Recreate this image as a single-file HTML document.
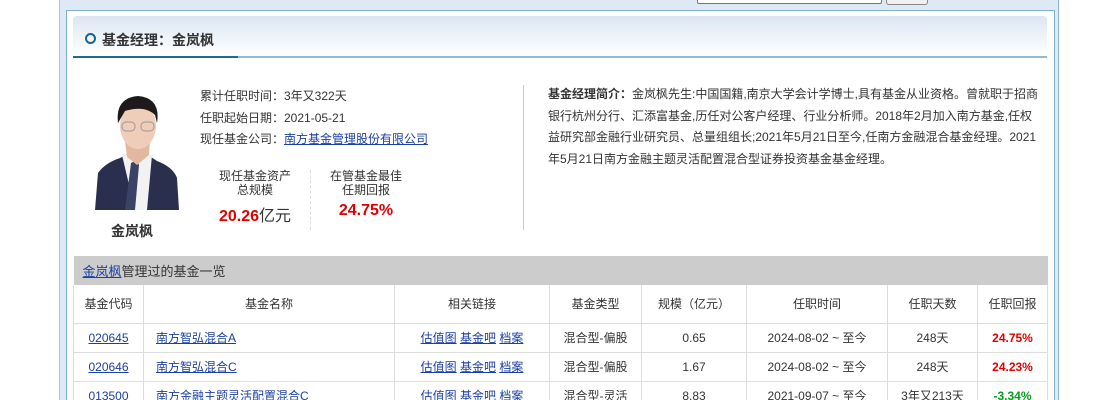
<!DOCTYPE html>
<html><head><meta charset="utf-8"><style>
*{margin:0;padding:0;box-sizing:border-box}
html,body{width:1120px;height:400px;overflow:hidden}
body{background:#fff;font-family:"Liberation Sans","Noto Sans CJK SC",sans-serif;font-size:12px;color:#333;position:relative}
.outer{position:absolute;left:59px;top:0;width:1000px;height:400px;background:#dde9f5;border-left:1px solid #a9c6de;border-right:1px solid #8fb4d0}
.inp{position:absolute;left:697px;top:0;width:185px;height:4px;background:#fff;border:1px solid #777;border-top:none;border-radius:0 0 2px 2px}
.btn{position:absolute;left:886px;top:0;width:42px;height:5px;background:#f0f0f0;border:1px solid #888;border-top:none;border-radius:0 0 3px 3px}
.panel{position:absolute;left:66px;top:10px;width:989px;height:390px;background:#fff;border:1px solid #7fb0cc;border-bottom:none}
.hd{position:absolute;left:73px;top:16px;width:974px;height:40px;background:linear-gradient(#dbe6f3,#fff);border-radius:4px 4px 0 0}
.hd b{position:absolute;left:29px;top:14px;font-size:14px;color:#333}
.circ{position:absolute;left:12px;top:17px;width:11px;height:11px;border:2px solid #1b6394;border-radius:50%}
.line1{position:absolute;left:73px;top:56px;width:974px;height:2px;background:#8dbdd3}
.line2{position:absolute;left:73px;top:56px;width:165px;height:2px;background:#1f6a94}
.t{position:absolute;white-space:nowrap}
a{color:#1a3fa5;text-decoration:underline}
.red{color:#e00000;font-weight:bold}
.grn{color:#079a1e;font-weight:bold}
.tw{position:absolute;left:73px;top:256px;width:975px;height:144px;overflow:hidden}
table{width:974px;border-collapse:collapse;table-layout:fixed}
td{border:1px solid #ddd;text-align:center;height:29px;font-size:12px;white-space:nowrap;overflow:hidden}
.cap td{background:#ccc;text-align:left;height:29px;font-size:13px;padding-left:9px;border:none;color:#333}
.th td{height:38px;border-top:none;color:#333}
</style></head><body>
<div class="outer"></div>
<div class="inp"></div><div class="btn"></div>
<div class="panel"></div>
<div class="hd"><div class="circ"></div><b>基金经理：金岚枫</b></div>
<div class="line1"></div><div class="line2"></div>
<svg class="t" style="left:95px;top:93px" width="84" height="117" viewBox="0 0 84 117">
<path d="M0 117 L3 80 Q10 70 25 65 L35 60 L50 60 L62 68 Q78 74 82 85 L84 117Z" fill="#2b2f4e"/>
<path d="M27 62 L40 117 L52 117 L57 62Z" fill="#f2f2f2"/>
<path d="M36 70 L42 67 L44 72 L40 117 L30 117Z" fill="#3a4266"/>
<path d="M30 48 L32 64 L42 72 L54 62 L55 46Z" fill="#e2b9a0"/>
<ellipse cx="43" cy="33" rx="18" ry="23" fill="#f0cdb8"/>
<path d="M23 30 Q20 5 43 3 Q66 5 62 30 L60 22 Q50 12 30 18Z" fill="#1e1a1c"/>
<rect x="27" y="29" width="13" height="9" rx="4" fill="none" stroke="#999" stroke-width="1"/>
<rect x="46" y="29" width="13" height="9" rx="4" fill="none" stroke="#999" stroke-width="1"/>
</svg>
<div class="t" style="left:111px;top:221px;font-size:14px;font-weight:bold">金岚枫</div>
<div class="t" style="left:200px;top:87px">累计任职时间：3年又322天</div>
<div class="t" style="left:200px;top:109px">任职起始日期：2021-05-21</div>
<div class="t" style="left:200px;top:130px">现任基金公司：<a>南方基金管理股份有限公司</a></div>
<div class="t" style="left:200px;top:169px;width:110px;text-align:center;line-height:14px">现任基金资产<br>总规模</div>
<div class="t" style="left:200px;top:202px;width:110px;text-align:center;font-size:16px"><span class="red">20.26</span>亿元</div>
<div style="position:absolute;left:310px;top:170px;height:60px;border-left:1px dashed #ddd"></div>
<div class="t" style="left:311px;top:169px;width:110px;text-align:center;line-height:14px">在管基金最佳<br>任期回报</div>
<div class="t red" style="left:311px;top:202px;width:110px;text-align:center;font-size:16px">24.75%</div>
<div style="position:absolute;left:523px;top:85px;height:145px;border-left:1px solid #ccc"></div>
<div style="position:absolute;left:548px;top:84px;width:495px;line-height:21.5px;color:#333"><b>基金经理简介：</b>金岚枫先生:中国国籍,南京大学会计学博士,具有基金从业资格。曾就职于招商银行杭州分行、汇添富基金,历任对公客户经理、行业分析师。2018年2月加入南方基金,任权益研究部金融行业研究员、总量组组长;2021年5月21日至今,任南方金融混合基金经理。2021年5月21日南方金融主题灵活配置混合型证券投资基金基金经理。</div>
<div class="tw"><table>
<colgroup><col style="width:70px"><col style="width:251px"><col style="width:155px"><col style="width:92px"><col style="width:105px"><col style="width:141px"><col style="width:90px"><col style="width:70px"></colgroup>
<tr class="cap"><td colspan="8"><a>金岚枫</a>管理过的基金一览</td></tr>
<tr class="th"><td>基金代码</td><td>基金名称</td><td>相关链接</td><td>基金类型</td><td>规模（亿元）</td><td>任职时间</td><td>任职天数</td><td>任职回报</td></tr>
<tr><td><a>020645</a></td><td style="text-align:left;padding-left:12px"><a>南方智弘混合A</a></td><td><a>估值图</a> <a>基金吧</a> <a>档案</a></td><td>混合型-偏股</td><td>0.65</td><td>2024-08-02 ~ 至今</td><td>248天</td><td class="red">24.75%</td></tr>
<tr><td><a>020646</a></td><td style="text-align:left;padding-left:12px"><a>南方智弘混合C</a></td><td><a>估值图</a> <a>基金吧</a> <a>档案</a></td><td>混合型-偏股</td><td>1.67</td><td>2024-08-02 ~ 至今</td><td>248天</td><td class="red">24.23%</td></tr>
<tr><td><a>013500</a></td><td style="text-align:left;padding-left:12px"><a>南方金融主题灵活配置混合C</a></td><td><a>估值图</a> <a>基金吧</a> <a>档案</a></td><td>混合型-灵活</td><td>8.83</td><td>2021-09-07 ~ 至今</td><td>3年又213天</td><td class="grn">-3.34%</td></tr>
</table></div>
</body></html>
